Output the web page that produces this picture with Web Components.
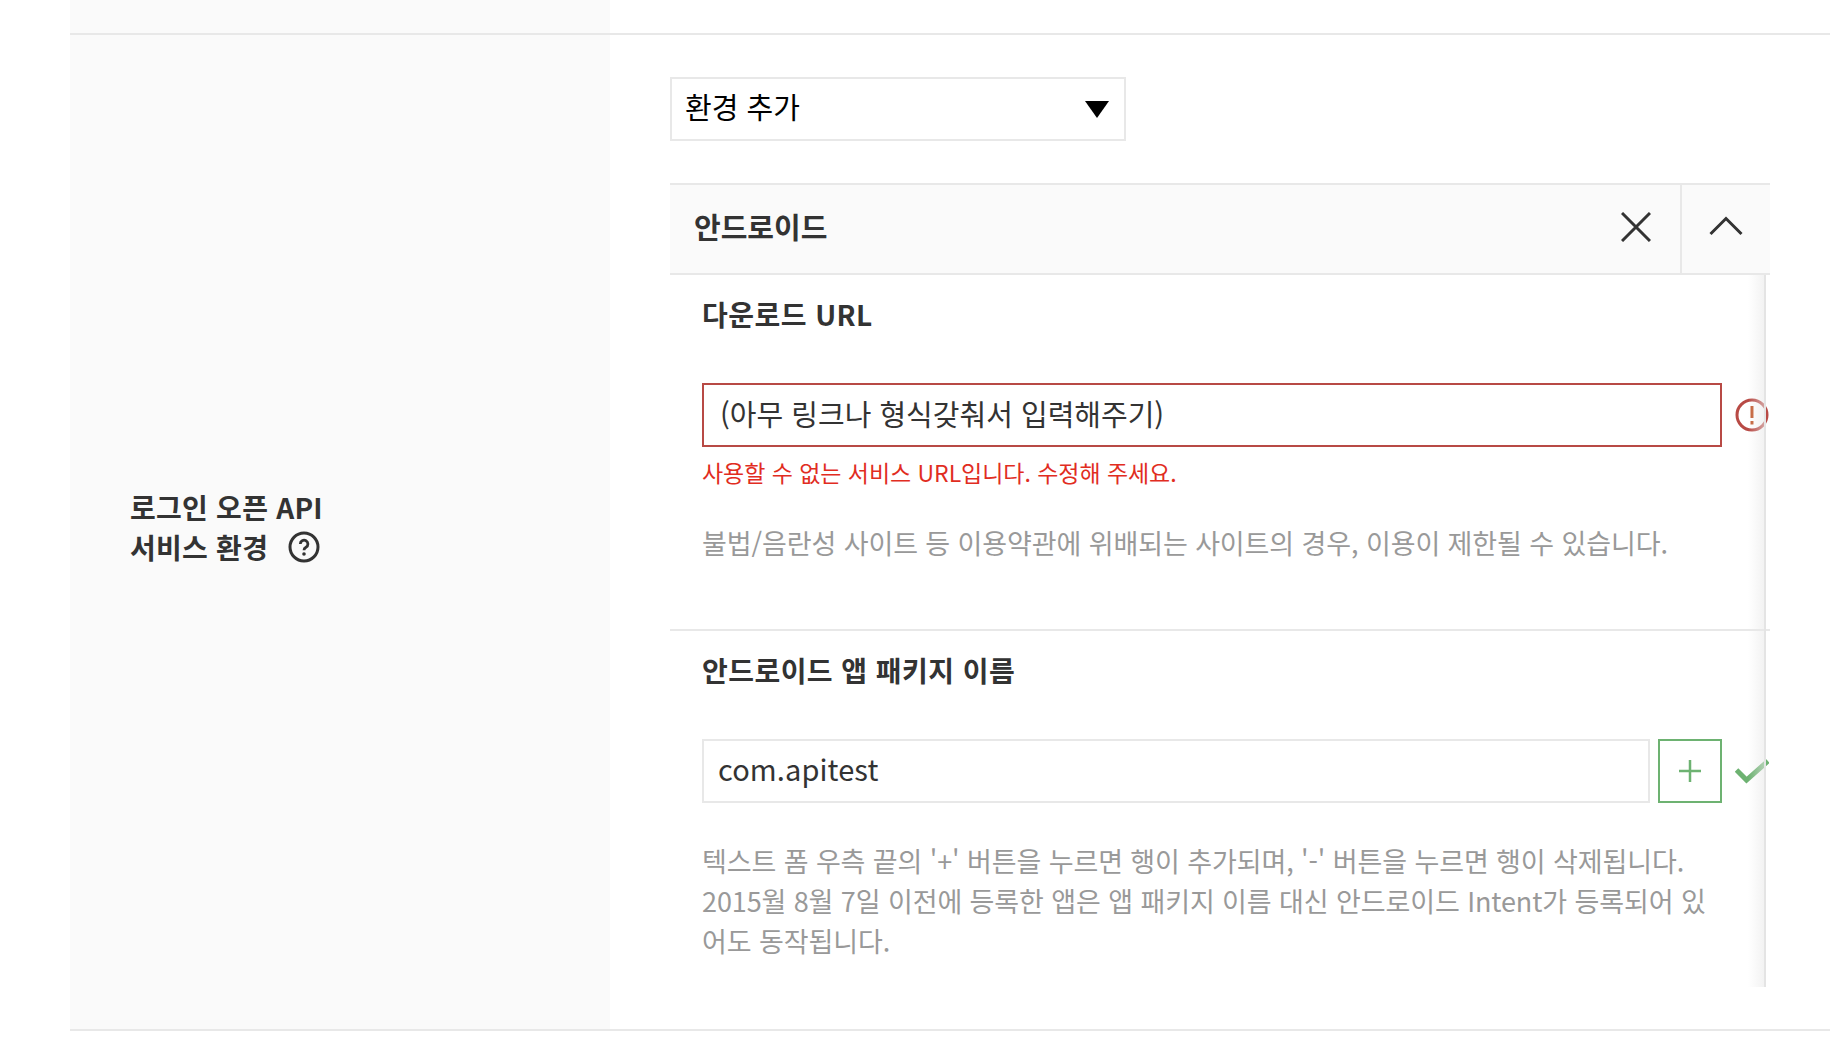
<!DOCTYPE html>
<html lang="ko">
<head>
<meta charset="utf-8">
<title>로그인 오픈 API 서비스 환경</title>
<style>
	html, body { margin: 0; background: #fff; overflow: hidden; }
	body { font-family: "Noto Sans CJK KR", "Noto Sans", sans-serif; color: #333; }
</style>
</head>
<body>
<setting-page>
	<setting-row>
		<span slot="label">로그인 오픈 API<br>서비스 환경<help-icon></help-icon></span>
		<env-select>환경 추가</env-select>
		<env-panel title-text="안드로이드">
			<env-field heading="다운로드 URL" class="first">
				<text-box state="error" value="(아무 링크나 형식갖춰서 입력해주기)"></text-box>
				<p slot="error">사용할 수 없는 서비스 URL입니다. 수정해 주세요.</p>
				<p slot="help">불법/음란성 사이트 등 이용약관에 위배되는 사이트의 경우, 이용이 제한될 수 있습니다.</p>
			</env-field>
			<env-field heading="안드로이드 앱 패키지 이름" class="last">
				<text-box state="ok" value="com.apitest"></text-box>
				<p slot="help">텍스트 폼 우측 끝의 '+' 버튼을 누르면 행이 추가되며, '-' 버튼을 누르면 행이 삭제됩니다.<br>2015월 8월 7일 이전에 등록한 앱은 앱 패키지 이름 대신 안드로이드 Intent가 등록되어 있<br>어도 동작됩니다.</p>
			</env-field>
		</env-panel>
	</setting-row>
</setting-page>

<script>
	function define(name, markup, extra = {}) {
		const template = document.createElement("template");
		template.innerHTML = markup;
		customElements.define(name, class extends HTMLElement {
			connectedCallback() {
				if (this.shadowRoot) return;
				const root = this.attachShadow({ mode: "open" });
				root.appendChild(template.content.cloneNode(true));
				if (extra.init) extra.init(this, root);
			}
		});
	}

	define("setting-page", `
		<style>
			:host { display: block; padding: 0 9px 0 70px; }
			.top { display: grid; grid-template-columns: 540px 1fr; height: 33px; border-bottom: 2px solid #e8e8e8; }
			.top i { background: #fafafa; }
		</style>
		<div class="top"><i></i></div>
		<slot></slot>
	`);

	define("setting-row", `
		<style>
			:host { display: grid; grid-template-columns: 540px 1fr; height: 996px; box-sizing: border-box; border-bottom: 2px solid #e8e8e8; }
			.label { background: #fafafa; display: flex; align-items: center; padding: 0 0 10px 60px; font-size: 28px; font-weight: 700; line-height: 40px; letter-spacing: .25px; color: #333; }
			.main { padding: 42px 60px 0; }
		</style>
		<div class="label"><div><slot name="label"></slot></div></div>
		<div class="main"><slot></slot></div>
	`);

	define("help-icon", `
		<style>
			:host { display: inline-block; width: 32px; height: 32px; margin-left: 20px; vertical-align: -4px; }
			svg { display: block; }
		</style>
		<svg width="32" height="32" viewBox="0 0 32 32" fill="none" stroke="#333" stroke-width="3">
			<circle cx="16" cy="16" r="14"/>
			<path d="M12.300 13a3.800 3.800 0 1 1 5.700 3.300c-1.300.8-2 1.400-2 2.900" stroke-width="2.800"/>
			<circle cx="16" cy="23" r="1.800" fill="#333" stroke="none"/>
		</svg>
	`);

	define("env-select", `
		<style>
			:host { display: flex; align-items: center; justify-content: space-between; box-sizing: border-box; width: 456px; height: 64px; border: 2px solid #e8e8e8; padding: 0 15px 6px 13px; font-size: 29px; color: #000; background: #fff; }
			i { width: 0; height: 0; border-left: 12px solid transparent; border-right: 12px solid transparent; border-top: 17px solid #000; margin-top: 6px; }
		</style>
		<span><slot></slot></span><i></i>
	`);

	define("env-panel", `
		<style>
			:host { display: block; margin-top: 42px; }
			header { display: flex; align-items: stretch; box-sizing: border-box; height: 92px; background: #fafafa; border-top: 2px solid #e8e8e8; border-bottom: 2px solid #e8e8e8; }
			h2 { flex: 1; margin: 0; align-self: center; padding: 0 0 7px 24px; font-size: 29px; font-weight: 700; color: #333; line-height: 40px; }
			.close { display: flex; align-items: center; padding: 0 29px 4px 0; }
			.fold { width: 90px; border-left: 2px solid #e8e8e8; box-sizing: border-box; display: flex; align-items: center; justify-content: center; padding-bottom: 6px; }
			svg { display: block; }
			.body { position: relative; overflow: hidden; height: 712px; }
			.body::after { content: ""; position: absolute; top: 0; bottom: 0; right: 4px; width: 18px; background: linear-gradient(to right, rgba(232,232,232,0), rgba(232,232,232,.55) 90%, #e4e4e4 90%); pointer-events: none; }
		</style>
		<header>
			<h2 id="title"></h2>
			<div class="close">
				<svg width="30" height="30" viewBox="0 0 30 30" fill="none" stroke="#333" stroke-width="3"><path d="M1 1l28 28M29 1L1 29"/></svg>
			</div>
			<div class="fold">
				<svg width="34" height="20" viewBox="0 0 34 20" fill="none" stroke="#333" stroke-width="3"><path d="M1.500 18L17 2.500 32.500 18"/></svg>
			</div>
		</header>
		<div class="body"><slot></slot></div>
	`, { init(host, root) { root.getElementById("title").textContent = host.getAttribute("title-text"); } });

	define("env-field", `
		<style>
			:host { display: block; box-sizing: border-box; padding: 0 0 0 32px; }
			:host(.first) { height: 356px; border-bottom: 2px solid #e8e8e8; }
			h3 { margin: 0; padding-top: 19px; height: 108px; box-sizing: border-box; font-size: 28px; font-weight: 700; line-height: 40px; letter-spacing: .45px; color: #333; }
			::slotted(p) { margin: 0; }
			::slotted([slot="error"]) { color: #e12d1f; font-size: 23px; line-height: 36px; margin-top: 7px; letter-spacing: -.05px; }
			::slotted([slot="help"]) { color: #999; font-size: 27px; line-height: 40px; letter-spacing: -.1px; margin-top: 38px; }
			:host(.first) ::slotted([slot="help"]) { margin-top: 33px; }
		</style>
		<h3 id="heading"></h3>
		<slot></slot>
		<slot name="error"></slot>
		<slot name="help"></slot>
	`, { init(host, root) { root.getElementById("heading").textContent = host.getAttribute("heading"); } });

	define("text-box", `
		<style>
			:host { display: flex; align-items: center; height: 64px; font-size: 29px; color: #333; }
			.box { box-sizing: border-box; height: 64px; flex: 0 0 auto; display: flex; align-items: center; background: #fff; }
			.add { box-sizing: border-box; width: 64px; height: 64px; margin-left: 8px; border: 2px solid #6db271; display: flex; align-items: center; justify-content: center; }
			svg { display: block; flex: none; }
			:host([state="error"]) .box { width: 1020px; border: 2px solid #b84a45; padding: 0 0 5px 16px; }
			:host([state="ok"]) .box { width: 948px; border: 2px solid #e8e8e8; padding: 0 0 7px 14px; letter-spacing: .1px; }
		</style>
		<div class="box" id="box"></div>
		<span id="rest"></span>
	`, { init(host, root) {
		root.getElementById("box").textContent = host.getAttribute("value");
		const rest = root.getElementById("rest");
		rest.style.display = "contents";
		if (host.getAttribute("state") === "error") {
			rest.innerHTML = `<svg style="margin-left:13px" width="34" height="34" viewBox="0 0 34 34" fill="none" stroke="#b84a45" stroke-width="3"><circle cx="17" cy="17" r="15"/><path d="M17 8v12" stroke-width="3" stroke="#c25a2e"/><path d="M17 23v3.500" stroke-width="3" stroke="#c25a2e"/></svg>`;
		} else {
			rest.innerHTML = `<div class="add"><svg width="24" height="24" viewBox="0 0 24 24" fill="none" stroke="#6db271" stroke-width="2.500"><path d="M12 1v22M1 12h22"/></svg></div>
				<svg style="margin-left:13px" width="34" height="26" viewBox="0 0 34 26" fill="none" stroke="#6db271" stroke-width="5"><path d="M1.500 12l10 10L33 3"/></svg>`;
		}
	} });
</script>
</body>
</html>
